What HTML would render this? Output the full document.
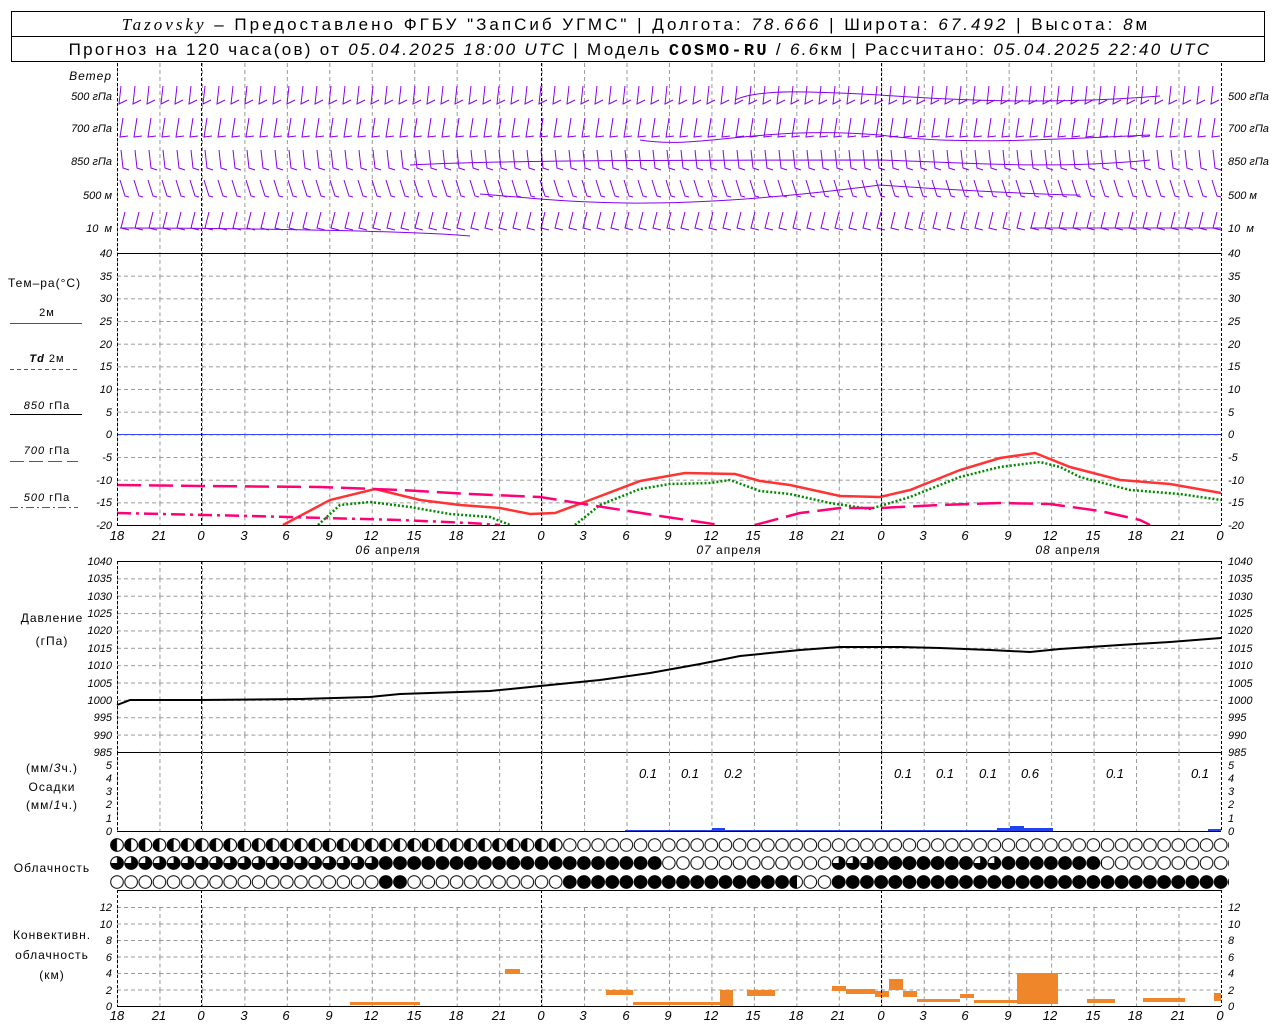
<!DOCTYPE html>
<html><head><meta charset="utf-8"><style>
html,body{margin:0;padding:0;background:#fff;width:1280px;height:1024px;overflow:hidden}
svg{display:block}
text{font-family:"Liberation Sans",sans-serif;fill:#000}
.t{font-size:11px;font-style:italic}
.l{font-size:12px;letter-spacing:1px}
.h{font-size:17px}
.ax{font-size:13px;font-style:italic}
</style></head><body>
<svg width="1280" height="1024" viewBox="0 0 1280 1024" xmlns="http://www.w3.org/2000/svg">
<defs>
<pattern id="gw" x="117" y="63" width="42.46" height="200" patternUnits="userSpaceOnUse"><line x1="0.5" y1="0" x2="0.5" y2="200" stroke="#999" stroke-dasharray="4,3"/></pattern>
<pattern id="gt" x="117" y="253" width="42.46" height="22.67" patternUnits="userSpaceOnUse"><line x1="0.5" y1="0" x2="0.5" y2="23" stroke="#999" stroke-dasharray="4,3"/><line x1="0" y1="0.5" x2="43" y2="0.5" stroke="#999" stroke-dasharray="4,3"/></pattern>
<pattern id="gp" x="117" y="561" width="42.46" height="17.36" patternUnits="userSpaceOnUse"><line x1="0.5" y1="0" x2="0.5" y2="18" stroke="#999" stroke-dasharray="4,3"/><line x1="0" y1="0.5" x2="43" y2="0.5" stroke="#999" stroke-dasharray="4,3"/></pattern>
<pattern id="gr" x="117" y="752" width="42.46" height="100" patternUnits="userSpaceOnUse"><line x1="0.5" y1="0" x2="0.5" y2="100" stroke="#999" stroke-dasharray="4,3"/></pattern>
<pattern id="gc" x="117" y="907" width="42.46" height="16.5" patternUnits="userSpaceOnUse"><line x1="0.5" y1="0" x2="0.5" y2="17" stroke="#999" stroke-dasharray="4,3"/><line x1="0" y1="0.5" x2="43" y2="0.5" stroke="#999" stroke-dasharray="4,3"/></pattern>
<pattern id="ce" x="110" y="0" width="14.15" height="1024" patternUnits="userSpaceOnUse"><circle cx="7" cy="845" r="6.3" fill="#fff" stroke="#000"/><circle cx="7" cy="863" r="6.3" fill="#fff" stroke="#000"/><circle cx="7" cy="882" r="6.3" fill="#fff" stroke="#000"/></pattern>
<pattern id="cf" x="110" y="0" width="14.15" height="1024" patternUnits="userSpaceOnUse"><circle cx="7" cy="845" r="6.3" fill="#000" stroke="#000"/><circle cx="7" cy="863" r="6.3" fill="#000" stroke="#000"/><circle cx="7" cy="882" r="6.3" fill="#000" stroke="#000"/></pattern>
<pattern id="ch" x="110" y="0" width="14.15" height="1024" patternUnits="userSpaceOnUse"><circle cx="7" cy="845" r="6.3" fill="#fff" stroke="#000"/><path d="M7,838.7 A6.3,6.3 0 0 0 7,851.3 Z" fill="#000"/><circle cx="7" cy="863" r="6.3" fill="#fff" stroke="#000"/><path d="M7,856.7 A6.3,6.3 0 0 1 7,869.3 Z M7,863 L0.7,863 A6.3,6.3 0 0 0 7,869.3Z" fill="#000"/><circle cx="7" cy="882" r="6.3" fill="#fff" stroke="#000"/><path d="M7,875.7 A6.3,6.3 0 0 0 7,888.3 Z" fill="#000"/></pattern>
<pattern id="wb" x="117" y="0" width="14" height="300" patternUnits="userSpaceOnUse" stroke="#8800ee" fill="none">
<path d="M4,86 L2,104 L10,100"/>
<path d="M6,118 L3,137 L11,136"/>
<path d="M4,150 L6,168 L12,170"/>
<path d="M3,180 L8,196 L12,197"/>
<path d="M8,212 L4,228 L12,230"/>
</pattern>
</defs>

<!-- header -->
<rect x="11.5" y="11.5" width="1253" height="50" fill="none" stroke="#000"/>
<line x1="11" y1="36.5" x2="1265" y2="36.5" stroke="#000"/>
<text x="636" y="30" class="h" text-anchor="middle" letter-spacing="3"><tspan font-family="Liberation Serif" font-style="italic">Tazovsky</tspan> – Предоставлено ФГБУ "ЗапСиб УГМС" | Долгота: <tspan font-style="italic">78.666</tspan> | Широта: <tspan font-style="italic">67.492</tspan> | Высота: <tspan font-style="italic">8</tspan>м</text>
<text x="640" y="55" class="h" text-anchor="middle" font-size="16" letter-spacing="2.3">Прогноз на 120 часа(ов) от <tspan font-style="italic">05.04.2025 18:00 UTC</tspan>  | Модель <tspan font-family="Liberation Mono" font-weight="bold">COSMO-RU</tspan> / <tspan font-style="italic">6.6</tspan>км | Рассчитано: <tspan font-style="italic">05.04.2025 22:40 UTC</tspan></text>

<!-- wind -->
<rect x="117" y="63" width="1104" height="190" fill="url(#gw)"/>
<rect x="117" y="63" width="1104" height="190" fill="url(#wb)"/>
<path d="M735,100 C760,88 820,92 880,95 C950,100 1050,105 1160,96 M640,140 C700,150 760,125 880,135 C950,145 1050,140 1150,135 M410,165 C500,160 700,160 880,160 C950,162 1050,170 1150,160 M480,194 C560,200 650,215 880,185 C950,190 1050,195 1080,195 M120,228 C200,228 400,230 470,236 M1030,228 L1221,228" stroke="#8800ee" fill="none"/>
<g class="t"><text x="112" y="80" text-anchor="end" class="l">Ветер</text>
<text x="112" y="100" text-anchor="end">500 гПа</text><text x="112" y="132" text-anchor="end">700 гПа</text><text x="112" y="165" text-anchor="end">850 гПа</text><text x="112" y="199" text-anchor="end">500 м</text><text x="112" y="232" text-anchor="end">10 &#160;м</text>
<text x="1228" y="100">500 гПа</text><text x="1228" y="132">700 гПа</text><text x="1228" y="165">850 гПа</text><text x="1228" y="199">500 м</text><text x="1228" y="232">10 &#160;м</text></g>
<line x1="117.5" y1="63" x2="117.5" y2="253" stroke="#000" stroke-dasharray="3,2"/>
<line x1="1221.5" y1="63" x2="1221.5" y2="253" stroke="#000" stroke-dasharray="3,2"/>

<!-- temperature -->
<rect x="117" y="253" width="1104" height="272" fill="url(#gt)"/>
<line x1="117" y1="253.5" x2="1221" y2="253.5" stroke="#000"/>
<line x1="117" y1="434.5" x2="1221" y2="434.5" stroke="#3344ff" stroke-width="1"/>
<g fill="none" stroke-width="2.5">
<polyline stroke="#ff3333" points="283,525 330,500 375,489 420,500 460,505 500,508 530,514 555,513 590,500 640,481 685,473 735,474 760,481 790,485 840,496 880,497 910,490 960,470 1000,458 1035,453 1070,467 1120,480 1170,484 1221,493"/>
<polyline stroke="#008800" stroke-dasharray="2,2" points="318,525 340,505 370,502 410,507 450,514 490,517 510,525"/>
<polyline stroke="#008800" stroke-dasharray="2,2" points="575,525 600,505 640,489 670,484 710,483 730,480 760,491 790,494 830,503 870,509 910,497 960,477 1000,467 1040,462 1060,467 1080,477 1130,490 1180,494 1221,500"/>
<polyline stroke="#ff0077" stroke-dasharray="24,8" points="117,485 200,486 320,487 400,490 470,494 540,497 590,505 660,516 700,522 720,525"/>
<polyline stroke="#ff0077" stroke-dasharray="24,8" points="755,525 800,513 840,508 880,508 940,505 1000,503 1050,504 1100,511 1140,520 1150,525"/>
<polyline stroke="#ff0077" stroke-dasharray="14,5,3,5" points="117,513 250,516 400,520 470,523 500,525"/>
</g>
<line x1="117.5" y1="253" x2="117.5" y2="525" stroke="#000" stroke-dasharray="3,2"/>
<line x1="1221.5" y1="253" x2="1221.5" y2="525" stroke="#000" stroke-dasharray="3,2"/>
<line x1="117" y1="525.5" x2="1221" y2="525.5" stroke="#000"/>
<g class="t" font-size="10">
<text x="112" y="257" text-anchor="end">40</text><text x="112" y="280" text-anchor="end">35</text><text x="112" y="302" text-anchor="end">30</text><text x="112" y="325" text-anchor="end">25</text><text x="112" y="348" text-anchor="end">20</text><text x="112" y="370" text-anchor="end">15</text><text x="112" y="393" text-anchor="end">10</text><text x="112" y="416" text-anchor="end">5</text><text x="112" y="438" text-anchor="end">0</text><text x="112" y="461" text-anchor="end">-5</text><text x="112" y="484" text-anchor="end">-10</text><text x="112" y="506" text-anchor="end">-15</text><text x="112" y="529" text-anchor="end">-20</text>
<text x="1228" y="257">40</text><text x="1228" y="280">35</text><text x="1228" y="302">30</text><text x="1228" y="325">25</text><text x="1228" y="348">20</text><text x="1228" y="370">15</text><text x="1228" y="393">10</text><text x="1228" y="416">5</text><text x="1228" y="438">0</text><text x="1228" y="461">-5</text><text x="1228" y="484">-10</text><text x="1228" y="506">-15</text><text x="1228" y="529">-20</text></g>
<g class="l"><text x="8" y="287">Тем–ра(°C)</text>
<text x="47" y="316" font-size="11" text-anchor="middle">2м</text><line x1="10" y1="323.5" x2="82" y2="323.5" stroke="#3344ff"/>
<text x="47" y="362" font-size="11" text-anchor="middle"><tspan font-style="italic" font-weight="bold">Td</tspan> 2м</text><line x1="10" y1="369.5" x2="78" y2="369.5" stroke="#3344ff" stroke-dasharray="4,3"/>
<text x="47" y="409" font-size="11" text-anchor="middle"><tspan font-style="italic">850</tspan> гПа</text><line x1="10" y1="414.5" x2="82" y2="414.5" stroke="#000"/>
<text x="47" y="454" font-size="11" text-anchor="middle"><tspan font-style="italic">700</tspan> гПа</text><line x1="10" y1="461.5" x2="78" y2="461.5" stroke="#ff0077" stroke-dasharray="14,5"/>
<text x="47" y="501" font-size="11" text-anchor="middle"><tspan font-style="italic">500</tspan> гПа</text><line x1="10" y1="507.5" x2="78" y2="507.5" stroke="#ff0077" stroke-dasharray="8,3,2,3"/></g>
<g class="ax">
<text x="117" y="540" text-anchor="middle">18</text><text x="159" y="540" text-anchor="middle">21</text><text x="201" y="540" text-anchor="middle">0</text><text x="244" y="540" text-anchor="middle">3</text><text x="286" y="540" text-anchor="middle">6</text><text x="329" y="540" text-anchor="middle">9</text><text x="371" y="540" text-anchor="middle">12</text><text x="414" y="540" text-anchor="middle">15</text><text x="456" y="540" text-anchor="middle">18</text><text x="499" y="540" text-anchor="middle">21</text><text x="541" y="540" text-anchor="middle">0</text><text x="583" y="540" text-anchor="middle">3</text><text x="626" y="540" text-anchor="middle">6</text><text x="668" y="540" text-anchor="middle">9</text><text x="711" y="540" text-anchor="middle">12</text><text x="753" y="540" text-anchor="middle">15</text><text x="796" y="540" text-anchor="middle">18</text><text x="838" y="540" text-anchor="middle">21</text><text x="881" y="540" text-anchor="middle">0</text><text x="923" y="540" text-anchor="middle">3</text><text x="965" y="540" text-anchor="middle">6</text><text x="1008" y="540" text-anchor="middle">9</text><text x="1050" y="540" text-anchor="middle">12</text><text x="1093" y="540" text-anchor="middle">15</text><text x="1135" y="540" text-anchor="middle">18</text><text x="1178" y="540" text-anchor="middle">21</text><text x="1220" y="540" text-anchor="middle">0</text></g>
<g class="l"><text x="388" y="554" text-anchor="middle"><tspan font-style="italic">06</tspan> апреля</text><text x="729" y="554" text-anchor="middle"><tspan font-style="italic">07</tspan> апреля</text><text x="1068" y="554" text-anchor="middle"><tspan font-style="italic">08</tspan> апреля</text></g>

<!-- pressure -->
<rect x="117" y="561" width="1104" height="191" fill="url(#gp)"/>
<polyline fill="none" stroke="#000" stroke-width="2" points="117,705 130,700 200,700 300,699 370,697 400,694 490,691 540,686 600,680 650,673 700,664 740,656 800,650 840,647 900,647 940,648 990,650 1030,652 1060,649 1120,645 1170,642 1221,638"/>
<line x1="117.5" y1="561" x2="117.5" y2="752" stroke="#000" stroke-dasharray="3,2"/>
<line x1="1221.5" y1="561" x2="1221.5" y2="752" stroke="#000" stroke-dasharray="3,2"/>
<line x1="117" y1="752.5" x2="1221" y2="752.5" stroke="#000"/>
<g class="t" font-size="9">
<text x="112" y="565" text-anchor="end">1040</text><text x="112" y="582" text-anchor="end">1035</text><text x="112" y="600" text-anchor="end">1030</text><text x="112" y="617" text-anchor="end">1025</text><text x="112" y="634" text-anchor="end">1020</text><text x="112" y="652" text-anchor="end">1015</text><text x="112" y="669" text-anchor="end">1010</text><text x="112" y="687" text-anchor="end">1005</text><text x="112" y="704" text-anchor="end">1000</text><text x="112" y="721" text-anchor="end">995</text><text x="112" y="739" text-anchor="end">990</text><text x="112" y="756" text-anchor="end">985</text>
<text x="1228" y="565">1040</text><text x="1228" y="582">1035</text><text x="1228" y="600">1030</text><text x="1228" y="617">1025</text><text x="1228" y="634">1020</text><text x="1228" y="652">1015</text><text x="1228" y="669">1010</text><text x="1228" y="687">1005</text><text x="1228" y="704">1000</text><text x="1228" y="721">995</text><text x="1228" y="739">990</text><text x="1228" y="756">985</text></g>
<text x="52" y="622" class="l" text-anchor="middle">Давление</text><text x="52" y="645" class="l" text-anchor="middle">(гПа)</text>

<!-- precip -->
<rect x="117" y="752" width="1104" height="79" fill="url(#gr)"/>
<rect x="712" y="828" width="13" height="3" fill="#2244ee"/>
<rect x="997" y="828" width="56" height="3" fill="#2244ee"/><rect x="1010" y="826" width="14" height="5" fill="#2244ee"/>
<rect x="1208" y="829" width="13" height="2" fill="#2244ee"/>
<rect x="625" y="830" width="420" height="1" fill="#2244ee"/>
<line x1="117.5" y1="752" x2="117.5" y2="831" stroke="#000" stroke-dasharray="3,2"/>
<line x1="1221.5" y1="752" x2="1221.5" y2="831" stroke="#000" stroke-dasharray="3,2"/>
<line x1="117" y1="831.5" x2="1221" y2="831.5" stroke="#000"/>
<g class="t" font-size="9">
<text x="112" y="769" text-anchor="end">5</text><text x="112" y="782" text-anchor="end">4</text><text x="112" y="795" text-anchor="end">3</text><text x="112" y="808" text-anchor="end">2</text><text x="112" y="822" text-anchor="end">1</text><text x="112" y="835" text-anchor="end">0</text>
<text x="1228" y="769">5</text><text x="1228" y="782">4</text><text x="1228" y="795">3</text><text x="1228" y="808">2</text><text x="1228" y="822">1</text><text x="1228" y="835">0</text></g>
<g class="ax"><text x="648" y="778" text-anchor="middle">0.1</text><text x="690" y="778" text-anchor="middle">0.1</text><text x="733" y="778" text-anchor="middle">0.2</text><text x="903" y="778" text-anchor="middle">0.1</text><text x="945" y="778" text-anchor="middle">0.1</text><text x="988" y="778" text-anchor="middle">0.1</text><text x="1030" y="778" text-anchor="middle">0.6</text><text x="1115" y="778" text-anchor="middle">0.1</text><text x="1200" y="778" text-anchor="middle">0.1</text></g>
<g class="l" text-anchor="middle"><text x="52" y="772">(мм/<tspan font-style="italic">3</tspan>ч.)</text><text x="52" y="791">Осадки</text><text x="52" y="809">(мм/<tspan font-style="italic">1</tspan>ч.)</text></g>

<!-- clouds -->
<rect x="110" y="836" width="1119" height="54" fill="url(#ce)"/>
<rect x="110" y="836" width="453" height="18" fill="url(#ch)"/>
<rect x="110" y="854" width="269" height="18" fill="url(#ch)"/>
<rect x="379" y="854" width="283" height="18" fill="url(#cf)"/>
<rect x="832" y="854" width="170" height="18" fill="url(#ch)"/>
<rect x="874" y="854" width="100" height="18" fill="url(#cf)"/>
<rect x="1002" y="854" width="100" height="18" fill="url(#cf)"/>
<rect x="379" y="873" width="28" height="18" fill="url(#cf)"/>
<rect x="563" y="873" width="234" height="18" fill="url(#cf)"/>
<rect x="832" y="873" width="397" height="18" fill="url(#cf)"/>
<text x="52" y="872" class="l" text-anchor="middle">Облачность</text>

<!-- convective -->
<rect x="117" y="890" width="1104" height="116" fill="#fff"/>
<line x1="117" y1="890.5" x2="1221" y2="890.5" stroke="#000"/>
<rect x="117" y="907" width="1104" height="99" fill="url(#gc)"/>
<g fill="#f0862a">
<rect x="350" y="1002" width="70" height="3"/><rect x="505" y="969" width="15" height="5"/><rect x="606" y="990" width="27" height="5"/><rect x="633" y="1002" width="87" height="3"/><rect x="720" y="990" width="13" height="16"/><rect x="747" y="990" width="28" height="6"/><rect x="832" y="986" width="14" height="5"/><rect x="846" y="989" width="29" height="5"/><rect x="875" y="991" width="14" height="6"/><rect x="889" y="979" width="14" height="11"/><rect x="903" y="991" width="14" height="6"/><rect x="917" y="999" width="43" height="3"/><rect x="960" y="994" width="14" height="4"/><rect x="974" y="1000" width="43" height="3"/><rect x="1017" y="973" width="41" height="31"/><rect x="1087" y="999" width="28" height="4"/><rect x="1143" y="998" width="42" height="4"/><rect x="1214" y="993" width="7" height="8"/>
</g>
<line x1="117.5" y1="890" x2="117.5" y2="1006" stroke="#000" stroke-dasharray="3,2"/>
<line x1="1221.5" y1="890" x2="1221.5" y2="1006" stroke="#000" stroke-dasharray="3,2"/>
<line x1="117" y1="1006.5" x2="1221" y2="1006.5" stroke="#000"/>
<g class="t" font-size="10">
<text x="112" y="911" text-anchor="end">12</text><text x="112" y="928" text-anchor="end">10</text><text x="112" y="944" text-anchor="end">8</text><text x="112" y="961" text-anchor="end">6</text><text x="112" y="977" text-anchor="end">4</text><text x="112" y="994" text-anchor="end">2</text><text x="112" y="1010" text-anchor="end">0</text>
<text x="1228" y="911">12</text><text x="1228" y="928">10</text><text x="1228" y="944">8</text><text x="1228" y="961">6</text><text x="1228" y="977">4</text><text x="1228" y="994">2</text><text x="1228" y="1010">0</text></g>
<g class="l" text-anchor="middle"><text x="52" y="939">Конвективн.</text><text x="52" y="959">облачность</text><text x="52" y="979">(км)</text></g>
<g class="ax">
<text x="117" y="1020" text-anchor="middle">18</text><text x="159" y="1020" text-anchor="middle">21</text><text x="201" y="1020" text-anchor="middle">0</text><text x="244" y="1020" text-anchor="middle">3</text><text x="286" y="1020" text-anchor="middle">6</text><text x="329" y="1020" text-anchor="middle">9</text><text x="371" y="1020" text-anchor="middle">12</text><text x="414" y="1020" text-anchor="middle">15</text><text x="456" y="1020" text-anchor="middle">18</text><text x="499" y="1020" text-anchor="middle">21</text><text x="541" y="1020" text-anchor="middle">0</text><text x="583" y="1020" text-anchor="middle">3</text><text x="626" y="1020" text-anchor="middle">6</text><text x="668" y="1020" text-anchor="middle">9</text><text x="711" y="1020" text-anchor="middle">12</text><text x="753" y="1020" text-anchor="middle">15</text><text x="796" y="1020" text-anchor="middle">18</text><text x="838" y="1020" text-anchor="middle">21</text><text x="881" y="1020" text-anchor="middle">0</text><text x="923" y="1020" text-anchor="middle">3</text><text x="965" y="1020" text-anchor="middle">6</text><text x="1008" y="1020" text-anchor="middle">9</text><text x="1050" y="1020" text-anchor="middle">12</text><text x="1093" y="1020" text-anchor="middle">15</text><text x="1135" y="1020" text-anchor="middle">18</text><text x="1178" y="1020" text-anchor="middle">21</text><text x="1220" y="1020" text-anchor="middle">0</text></g>

<!-- day separators -->
<g stroke="#000" stroke-dasharray="3,2">
<line x1="201.5" y1="63" x2="201.5" y2="525"/><line x1="541.5" y1="63" x2="541.5" y2="525"/><line x1="881.5" y1="63" x2="881.5" y2="525"/>
<line x1="201.5" y1="561" x2="201.5" y2="831"/><line x1="541.5" y1="561" x2="541.5" y2="831"/><line x1="881.5" y1="561" x2="881.5" y2="831"/>
<line x1="201.5" y1="890" x2="201.5" y2="1006"/><line x1="541.5" y1="890" x2="541.5" y2="1006"/><line x1="881.5" y1="890" x2="881.5" y2="1006"/>
</g>
<line x1="117" y1="561.5" x2="1221" y2="561.5" stroke="#000"/>
</svg>
</body></html>
